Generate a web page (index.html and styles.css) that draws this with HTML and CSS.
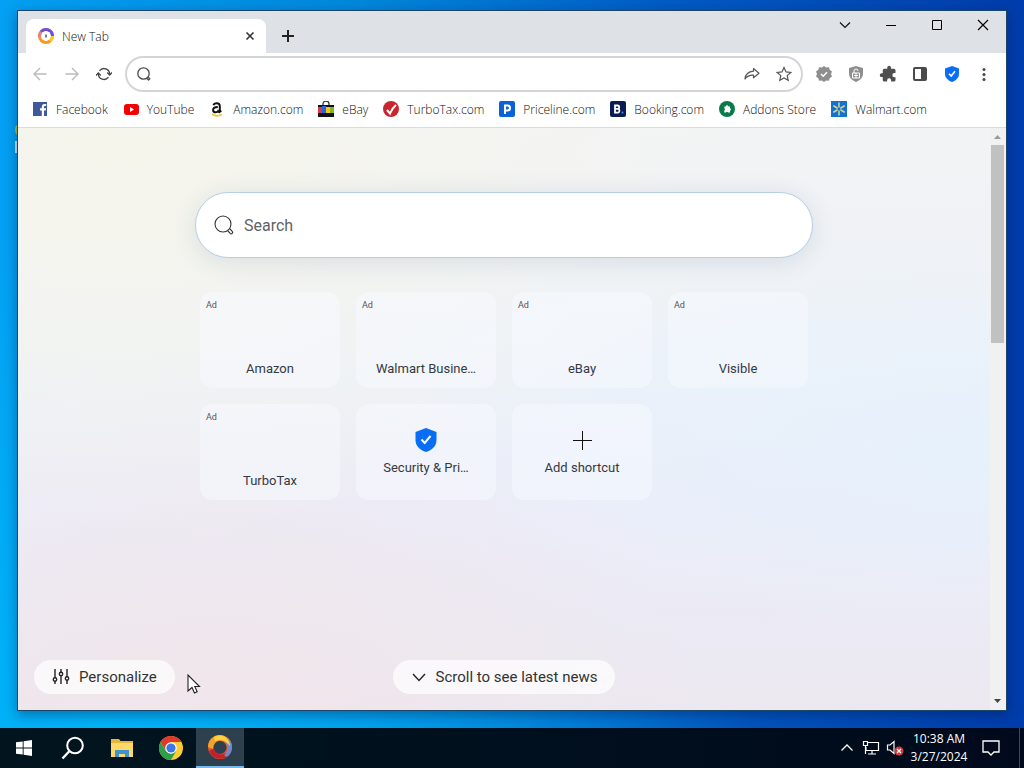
FILE: index.html
```html
<!DOCTYPE html>
<html lang="en">
<head>
    <meta charset="UTF-8">
    <meta name="viewport" content="width=device-width, initial-scale=1.0">
    <title>New Tab</title>
    <link rel="stylesheet" href="styles.css">
</head>
<body>
    <div class="desktop">
        <svg class="desktop-icon" width="20" height="36" viewBox="0 0 20 36"><circle cx="10" cy="10" r="9" fill="#a8c64a"/><path d="M1 21h3v12H1z" fill="#cfe6f5"/></svg>

        <div class="window">
            <div class="tab-strip">
                <div class="tab">
                    <svg class="tab-icon" width="16" height="16" viewBox="0 0 16 16">
                        <circle cx="8" cy="8" r="6.500" fill="#fff" stroke="#f79a1c" stroke-width="3"/>
                        <path d="M3 4A6.500 6.500 0 0 1 14.500 8" fill="none" stroke="#6a4fe0" stroke-width="3"/>
                        <path d="M1.500 9A6.500 6.500 0 0 1 3 4" fill="none" stroke="#e8808c" stroke-width="3"/>
                        <path d="M14.500 8A6.500 6.500 0 0 1 12 13" fill="none" stroke="#ffc928" stroke-width="3"/>
                        <path d="M4 4.500l4-1.500 4 1.500-1 5-3 4-3-4z" fill="#fff"/>
                        <path d="M8 6.500v3" stroke="#555" stroke-width="1.500"/>
                    </svg>
                    <span class="tab-title">New Tab</span>
                    <button class="tab-close" aria-label="Close tab">
                        <svg width="10" height="10" viewBox="0 0 10 10"><path d="M1.500 1.500l7 7M8.500 1.500l-7 7" stroke="#333" stroke-width="1.600"/></svg>
                    </button>
                </div>
                <button class="new-tab" aria-label="New tab">
                    <svg width="14" height="14" viewBox="0 0 14 14"><path d="M7 1v12M1 7h12" stroke="#222" stroke-width="2"/></svg>
                </button>
                <div class="window-controls">
                    <button aria-label="Search tabs"><svg width="12" height="12" viewBox="0 0 12 12"><path d="M1 3.500l5 5 5-5" fill="none" stroke="#111" stroke-width="1.200"/></svg></button>
                    <button aria-label="Minimize"><svg width="12" height="12" viewBox="0 0 12 12"><path d="M1 6.500h10" stroke="#000"/></svg></button>
                    <button aria-label="Maximize"><svg width="12" height="12" viewBox="0 0 12 12"><path d="M1.500 1.500h9v9h-9z" fill="none" stroke="#000"/></svg></button>
                    <button aria-label="Close"><svg width="12" height="12" viewBox="0 0 12 12"><path d="M1 1l10 10M11 1L1 11" stroke="#000" stroke-width="1.200"/></svg></button>
                </div>
            </div>

            <div class="toolbar">
                <button class="tool" aria-label="Back"><svg width="16" height="16" viewBox="0 0 16 16"><path d="M14.500 8H2M8 2L2 8l6 6" fill="none" stroke="#b9babc" stroke-width="1.400"/></svg></button>
                <button class="tool" aria-label="Forward"><svg width="16" height="16" viewBox="0 0 16 16"><path d="M1.500 8H14M8 2l6 6-6 6" fill="none" stroke="#b9babc" stroke-width="1.400"/></svg></button>
                <button class="tool" aria-label="Reload"><svg width="16" height="16" viewBox="0 0 16 16"><g fill="none" stroke="#444" stroke-width="1.300"><path d="M3.500 4.800A5.700 5.700 0 0 1 13.700 8"/><path d="M12.500 11.200A5.700 5.700 0 0 1 2.300 8"/><path d="M0 9.500l2.300-2.500L4.800 9.500M11.200 6.500l2.500 2.500L16 6.500"/></g></svg></button>
                <div class="omnibox">
                    <svg width="16" height="16" viewBox="0 0 16 16"><g fill="none" stroke="#4a4a4a" stroke-width="1.300"><circle cx="7.500" cy="7.500" r="5.700"/><path d="M11 12.500l1.500 1.500 1.300-1.300-1.500-1.500" stroke-linejoin="round"/></g></svg>
                    <input type="text" aria-label="Address bar">
                    <button class="tool" aria-label="Share"><svg width="16" height="16" viewBox="0 0 16 16"><path d="M9.500 2.500l5.500 4.700-5.500 4.600V9.200C5.500 9 3 10.200 1 13c.4-4.500 3.500-7.300 8.500-7.800z" fill="none" stroke="#555" stroke-width="1.200" stroke-linejoin="round"/></svg></button>
                    <button class="tool" aria-label="Bookmark"><svg width="16" height="16" viewBox="0 0 16 16"><path d="M8 1.500l2 4.400 4.800.5-3.600 3.200 1 4.700L8 11.900l-4.200 2.400 1-4.700L1.200 6.400 6 5.900z" fill="none" stroke="#555" stroke-width="1.200"/></svg></button>
                </div>
                <button class="tool" aria-label="Verified"><svg width="16" height="16" viewBox="0 0 16 16"><path d="M8 0l2.200 1.500 2.700-.3.800 2.600L16 5.500 15 8l1 2.500-2.300 1.700-.8 2.600-2.700-.3L8 16l-2.200-1.500-2.700.3-.8-2.600L0 10.500 1 8 0 5.500l2.300-1.700.8-2.600 2.700.3z" fill="#8e8e8e"/><path d="M5 8l2.200 2.200L11 6.200" fill="none" stroke="#fff" stroke-width="1.500"/></svg></button>
                <button class="tool" aria-label="Privacy guard"><svg width="16" height="16" viewBox="0 0 16 16"><path d="M8 0l7 2v5.500c0 4-3 7-7 8.500-4-1.500-7-4.500-7-8.500V2z" fill="#8f8f8f"/><path d="M4.500 7h7v5h-7zM6 7V5a2 2 0 0 1 4 0M6 9.500h4M8 7v5" fill="none" stroke="#fff"/></svg></button>
                <button class="tool" aria-label="Extensions"><svg width="18" height="18" viewBox="0 0 24 24"><path d="M3.500 11H5V7a2 2 0 0 1 2-2h4V3.500a2.500 2.500 0 0 1 5 0V5h4a2 2 0 0 1 2 2v3.800h-1.500a2.700 2.700 0 0 0 0 5.400H22V20a2 2 0 0 1-2 2h-3.800v-1.500a2.700 2.700 0 0 0-5.400 0V22H7a2 2 0 0 1-2-2v-4H3.500a2.500 2.500 0 0 1 0-5z" fill="#4f4f4f"/></svg></button>
                <button class="tool" aria-label="Side panel"><svg width="16" height="16" viewBox="0 0 16 16"><rect x="2" y="2" width="12" height="12" rx="1" fill="none" stroke="#4a4a4a" stroke-width="2"/><path d="M9 2h5v12H9z" fill="#4a4a4a"/></svg></button>
                <button class="tool" aria-label="Security"><svg width="16" height="16" viewBox="0 0 16 16"><path d="M8 0l7 2.500V8c0 3.800-3 6.500-7 8-4-1.500-7-4.200-7-8V2.500z" fill="#0a6ef5"/><path d="M5 7.800L7.200 10 11 5.200" fill="none" stroke="#fff" stroke-width="1.600"/></svg></button>
                <button class="tool" aria-label="Menu"><svg width="16" height="16" viewBox="0 0 16 16" fill="#444"><circle cx="8" cy="3.500" r="1.500"/><circle cx="8" cy="8.500" r="1.500"/><circle cx="8" cy="13.500" r="1.500"/></svg></button>
            </div>

            <nav class="bookmarks">
                <a href="#"><svg width="16" height="16" viewBox="0 0 16 16"><rect x="1" y="1" width="14" height="14" fill="#3f589b"/><path d="M9.800 15V9.500H8V7.300h1.800V6c0-2 1-3 2.700-3h1.700v2.100h-1.100c-.9 0-1.100.4-1.100 1.100v1.100h2.100l-.3 2.200H12V15z" fill="#fff"/></svg>Facebook</a>
                <a href="#"><svg width="16" height="16" viewBox="0 0 16 16"><rect x="1" y="3" width="15" height="11" rx="3" fill="#f40000"/><path d="M7 6l4 2.500L7 11z" fill="#fff"/></svg>YouTube</a>
                <a href="#"><svg width="16" height="16" viewBox="0 0 16 16"><path d="M4.500 4.300C4.800 2.700 6.200 2.200 7.800 2.200c2.200 0 3 1 3 2.900v3.700c0 .6.300 1 .7 1.400l-1.200 1-1.200-1.200c-1.500 2-5 1.700-5-1 0-2.300 2.300-2.900 4.700-2.900" fill="none" stroke="#111" stroke-width="2"/><path d="M3 13c3 2.300 7 2.300 10 .3" fill="none" stroke="#e9c92d" stroke-width="1.600"/></svg>Amazon.com</a>
                <a href="#"><svg width="16" height="16" viewBox="0 0 16 16"><path d="M5 4V3a3 3 0 0 1 6 0v1" fill="none" stroke="#333" stroke-width="1.300"/><path d="M0 4h16v12H0z" fill="#111"/><path d="M0 6h4v6H0z" fill="#e03645"/><path d="M4 5h4v7H4z" fill="#1c6be0"/><path d="M8 6h4v6H8z" fill="#f5c518"/><path d="M12 6h4v6h-4z" fill="#83b529"/></svg>eBay</a>
                <a href="#"><svg width="16" height="16" viewBox="0 0 16 16"><circle cx="8" cy="8" r="8" fill="#c9252d"/><path d="M4 9l3 3.500c1.300-3.500 3-6 6-8.500" fill="none" stroke="#fff" stroke-width="2"/></svg>TurboTax.com</a>
                <a href="#"><svg width="16" height="16" viewBox="0 0 16 16"><rect width="16" height="16" rx="2" fill="#0b62d6"/><path d="M6 13V5M5 4.500h3.500a2.500 2.500 0 0 1 0 5H6" fill="none" stroke="#fff" stroke-width="2"/></svg>Priceline.com</a>
                <a href="#"><svg width="16" height="16" viewBox="0 0 16 16"><rect width="16" height="16" rx="2" fill="#0b1b55"/><path d="M5 4.500h2.500a1.700 1.700 0 0 1 0 3.400H5h3a1.900 1.900 0 0 1 0 3.700H5z" fill="none" stroke="#fff" stroke-width="1.800"/><circle cx="12.500" cy="11.500" r="1" fill="#2f9be8"/></svg>Booking.com</a>
                <a href="#"><svg width="16" height="16" viewBox="0 0 16 16"><circle cx="8" cy="8" r="8" fill="#0b7a4b"/><path d="M5.500 5.500h1.200a1.300 1.300 0 0 1 2.600 0H11v1.800a1.300 1.300 0 0 1 0 2.500v1.700H9.200a1.200 1.200 0 0 0-2.200 0H5.300V9.400a1.200 1.200 0 0 0 0-2.200z" fill="#fff"/></svg>Addons Store</a>
                <a href="#"><svg width="16" height="16" viewBox="0 0 16 16"><rect width="16" height="16" fill="#1271d1"/><path d="M8 2v4M8 10v4M2.800 5l3.400 2M9.800 9l3.400 2M13.200 5L9.800 7M6.200 9l-3.400 2" stroke="#d9d68c" stroke-width="1.500" stroke-linecap="round"/></svg>Walmart.com</a>
            </nav>

            <div class="viewport">
                <main class="page">
                    <form class="search">
                        <label for="search" class="search-label">
                            <svg width="20" height="20" viewBox="0 0 20 20"><g fill="none" stroke="#333" stroke-width="1.100"><circle cx="9" cy="9" r="8"/><path d="M14 16l2.200 2.300a1.400 1.400 0 0 0 2-2L16 14" stroke-linecap="round"/></g></svg>
                        </label>
                        <input type="text" id="search" placeholder="Search">
                    </form>

                    <div class="tiles">
                        <a href="#" class="tile"><span class="ad">Ad</span><span class="name">Amazon</span></a>
                        <a href="#" class="tile"><span class="ad">Ad</span><span class="name">Walmart Busine…</span></a>
                        <a href="#" class="tile"><span class="ad">Ad</span><span class="name">eBay</span></a>
                        <a href="#" class="tile"><span class="ad">Ad</span><span class="name">Visible</span></a>
                        <a href="#" class="tile"><span class="ad">Ad</span><span class="name">TurboTax</span></a>
                        <a href="#" class="tile tile-icon">
                            <svg width="24" height="24" viewBox="0 0 24 24"><path d="M12 0l10.500 4v8c0 6-4.500 10-10.500 12C6 22 1.500 18 1.500 12V4z" fill="#0a6ef5"/><path d="M7.500 11.500l3.200 3.500 5.800-7" fill="none" stroke="#fff" stroke-width="2"/></svg>
                            <span class="name">Security &amp; Pri…</span>
                        </a>
                        <button class="tile tile-icon">
                            <svg width="24" height="24" viewBox="0 0 24 24"><path d="M12.500 3v19M3 12.500h19" stroke="#111" stroke-width="1"/></svg>
                            <span class="name">Add shortcut</span>
                        </button>
                    </div>

                    <div class="page-actions">
                        <button class="pill">
                            <svg width="18" height="18" viewBox="0 0 18 18"><g fill="#fff" stroke="#222" stroke-width="1.400"><path d="M3 1v15M9 1v15M15 1v15"/><circle cx="3" cy="11.500" r="1.700"/><circle cx="9" cy="6" r="1.700"/><circle cx="15" cy="10.500" r="1.700"/></g></svg>
                            Personalize
                        </button>
                        <button class="pill scroll-news">
                            <svg width="16" height="16" viewBox="0 0 16 16"><path d="M2 5l6 6.500L14 5" fill="none" stroke="#222" stroke-width="1.400"/></svg>
                            Scroll to see latest news
                        </button>
                    </div>
                </main>
                <div class="scrollbar">
                    <svg width="13" height="17" viewBox="0 0 13 17"><path d="M3 11l3.500-4 3.500 4z" fill="#999"/></svg>
                    <div class="thumb"></div>
                    <svg width="13" height="17" viewBox="0 0 13 17"><path d="M3 6l3.500 4L10 6z" fill="#444"/></svg>
                </div>
            </div>
        </div>

        <svg class="cursor" width="14" height="20" viewBox="0 0 14 20"><path d="M1 1v16l4-3.500L7.500 19l2.700-1.200L7.800 12.500H12.500z" fill="#fff" stroke="#222" stroke-width="1.100"/></svg>
    </div>

    <footer class="taskbar">
        <button class="task" aria-label="Start"><svg width="16" height="16" viewBox="0 0 16 16"><path d="M0 2.300L6.700 1.400v6.200H0zM7.600 1.200L16 0v7.600H7.600zM0 8.400h6.700v6.200L0 13.700zM7.600 8.400H16V16l-8.400-1.200z" fill="#fff"/></svg></button>
        <button class="task" aria-label="Search"><svg width="24" height="24" viewBox="0 0 24 24"><circle cx="14" cy="9.500" r="7.800" fill="none" stroke="#fff" stroke-width="2"/><path d="M8.500 15L1.500 22.500" stroke="#fff" stroke-width="2.400"/></svg></button>
        <button class="task" aria-label="File Explorer"><svg width="22" height="18" viewBox="0 0 22 18"><path d="M0 0h8l1.500 2H22v16H0z" fill="#e8b43a"/><path d="M0 4h22v14H0z" fill="#ffd86b"/><path d="M4 18v-7h14v7h-4v-3H8v3z" fill="#3e93cf"/></svg></button>
        <button class="task" aria-label="Chrome"><svg width="24" height="24" viewBox="0 0 24 24"><circle cx="12" cy="12" r="12" fill="#fc3"/><path d="M1.600 6A12 12 0 0 1 22.400 6H12L7 15z" fill="#dc3b2e"/><path d="M1.600 6A12 12 0 0 0 12 24l5.200-9L12 17.500 6.800 15z" fill="#2f9e4b"/><circle cx="12" cy="12" r="5.800" fill="#fff"/><circle cx="12" cy="12" r="4.600" fill="#3b78e7"/></svg></button>
        <button class="task active" aria-label="Browser"><svg width="24" height="24" viewBox="0 0 24 24"><path d="M12 0a12 12 0 1 0 0 24 12 12 0 0 0 0-24zm0 6a6.500 6.500 0 1 1 0 13 6.500 6.500 0 0 1 0-13z" fill="#e9532d" fill-rule="evenodd"/><path d="M1 16C4 24 14 26 20 21c-1 0-1-1-1.500-3.500C14 21 8 20 5.500 13.500z" fill="#c3202b"/><path d="M19 2.300A12 12 0 0 1 19.500 21.500c-3 .5-4-1-2-3 3-4 2-9-1.500-12z" fill="#7189c9"/><path d="M0 12C0 4 7-1 14 .2c5 1 8 5 8 11-3-6-8-8-13-5.200C6 8 5 11 5 14z" fill="#f0a32a"/><path d="M6 2c7-4 15 0 16 9-4-5-8-7-15-5z" fill="#ffd23e"/></svg></button>

        <div class="tray">
            <button aria-label="Show hidden icons"><svg width="14" height="14" viewBox="0 0 14 14"><path d="M1.500 9.500L7 4l5.500 5.500" fill="none" stroke="#fff" stroke-width="1.300"/></svg></button>
            <button aria-label="Network"><svg width="18" height="16" viewBox="0 0 18 16"><path d="M5 2.500h11.500v8H4V7M10 10.500v3M6 14h8M1.500 1.500h4v4h-4zM3.500 5.500V14" fill="none" stroke="#fff" stroke-width="1.200"/></svg></button>
            <button aria-label="Volume"><svg width="18" height="16" viewBox="0 0 18 16"><path d="M1.500 5H4l4-3.500v12L4 10H1.500z" fill="none" stroke="#fff" stroke-width="1.200"/><circle cx="13" cy="11" r="4.500" fill="#d13b3b"/><path d="M11 9l4 4M15 9l-4 4" stroke="#fff" stroke-width="1.200"/></svg></button>
            <div class="clock">10:38 AM<br>3/27/2024</div>
            <button class="notifications" aria-label="Notifications"><svg width="18" height="18" viewBox="0 0 18 18"><path d="M1 2h16v11h-5l-3 3-3-3H1z" fill="none" stroke="#fff" stroke-width="1.300"/></svg></button>
        </div>
    </footer>
</body>
</html>
```
FILE: styles.css
```css
* {
    box-sizing: border-box;
}

body {
    margin: 0;
    height: 100vh;
    display: flex;
    flex-direction: column;
    overflow: hidden;
    font-family: "Open Sans", "Noto Sans", sans-serif;
    font-size: 12px;
    color: #333;
}

button {
    display: flex;
    align-items: center;
    justify-content: center;
    padding: 0;
    border: none;
    background: none;
    font: inherit;
    color: inherit;
    cursor: pointer;
}

a {
    color: inherit;
    text-decoration: none;
}

input {
    flex: 1;
    min-width: 0;
    border: none;
    outline: none;
    background: none;
    font: inherit;
}

svg {
    display: block;
    flex-shrink: 0;
}

.desktop {
    position: relative;
    flex: 1;
    min-height: 0;
    display: flex;
    padding: 10px 17px 17px;
    background:
        radial-gradient(at 10% 100%, #00b4f8, rgba(0, 180, 248, 0) 50%),
        linear-gradient(to right, #04a0f3, #0088dc 35%, #005cc4 65%, #003cab);
}

.desktop-icon {
    position: absolute;
    left: 14px;
    top: 120px;
}

/* Browser window */
.window {
    position: relative;
    flex: 1;
    display: flex;
    flex-direction: column;
    background: white;
    border: 1px solid #1c4569;
    box-shadow: 0 4px 12px rgba(0, 20, 70, 0.4);
}

.tab-strip {
    display: flex;
    height: 42px;
    background: #dee1e6;
}

.tab {
    display: flex;
    align-items: center;
    width: 240px;
    margin: 8px 0 0 8px;
    padding: 0 8px 0 12px;
    background: white;
    border-radius: 8px 8px 0 0;
}

.tab-title {
    flex: 1;
    margin-left: 8px;
}

.tab-title,
.bookmarks {
    font-weight: 300;
    color: #111;
}

.tab-close {
    width: 16px;
    height: 16px;
}

.new-tab {
    width: 28px;
    height: 28px;
    margin: 11px 0 0 8px;
}

.window-controls {
    display: flex;
    margin-left: auto;
}

.window-controls button {
    width: 46px;
    height: 28px;
}

.toolbar {
    display: flex;
    align-items: center;
    gap: 4px;
    padding: 3px 8px;
}

.tool {
    width: 28px;
    height: 28px;
}

.omnibox {
    flex: 1;
    display: flex;
    align-items: center;
    gap: 4px;
    height: 36px;
    margin: 0 3px;
    padding: 0 3px 0 9px;
    border: 2px solid #d3d6d9;
    border-radius: 18px;
}

.bookmarks {
    display: flex;
    align-items: center;
    gap: 15px;
    height: 33px;
    padding: 0 14px 4px;
    border-bottom: 1px solid #d9dcdf;
    white-space: nowrap;
}

.bookmarks a {
    display: flex;
    align-items: center;
    gap: 8px;
}

/* New tab page */
.viewport {
    flex: 1;
    min-height: 0;
    display: flex;
}

.page {
    flex: 1;
    display: flex;
    flex-direction: column;
    align-items: center;
    padding: 64px 16px 16px;
    font-family: Roboto, sans-serif;
    background:
        radial-gradient(ellipse at 10% 0, #f6f5eb, rgba(246, 245, 235, 0) 50%),
        radial-gradient(ellipse at 100% 55%, #e6f1fc, rgba(230, 241, 252, 0) 40%),
        radial-gradient(ellipse at 20% 110%, #f1e5ea, rgba(241, 229, 234, 0) 45%),
        linear-gradient(#f2f3f4, #edf2f8 40%, #ebedf9 65%, #ece8f0);
}

.search {
    display: flex;
    align-items: center;
    gap: 8px;
    width: 100%;
    max-width: 618px;
    height: 66px;
    padding: 0 18px;
    background: white;
    border: 1px solid #b5cfe6;
    border-radius: 33px;
    box-shadow: 0 4px 24px rgba(60, 90, 120, 0.14);
}

.search input {
    font-size: 16px;
}

.search input::placeholder {
    color: #5f6368;
}

.tiles {
    display: grid;
    grid-template-columns: repeat(4, 140px);
    gap: 16px;
    margin-top: 34px;
}

.tile {
    display: flex;
    flex-direction: column;
    justify-content: space-between;
    height: 96px;
    padding: 8px 6px 11px;
    background: rgba(248, 250, 255, 0.5);
    border-radius: 12px;
}

.ad {
    font-size: 9px;
    line-height: 11px;
    color: #555;
}

.name {
    font-size: 13px;
    line-height: 16px;
    text-align: center;
    color: #333a44;
}

.tile-icon {
    align-items: center;
    justify-content: center;
    gap: 8px;
    padding: 8px 6px;
}

.page-actions {
    display: grid;
    grid-template-columns: 1fr auto 1fr;
    width: 100%;
    margin-top: auto;
}

.pill {
    justify-self: start;
    gap: 9px;
    height: 34px;
    padding: 0 18px;
    background: rgba(255, 255, 255, 0.7);
    border-radius: 17px;
    font-size: 15px;
}

.scrollbar {
    display: flex;
    flex-direction: column;
    justify-content: space-between;
    width: 16px;
    padding: 0 2px 0 1px;
    background: #f1f1f1;
}

.thumb {
    height: 34%;
    margin-bottom: auto;
    background: #c1c1c1;
}

.cursor {
    position: absolute;
    left: 187px;
    top: 674px;
}

/* Taskbar */
.taskbar {
    display: flex;
    gap: 1px;
    height: 40px;
    background: linear-gradient(to right, #01151f, #000a1c);
    color: white;
}

.task {
    width: 48px;
}

.active {
    background: #2c414d;
    border-bottom: 2px solid #76b9ed;
}

.tray {
    display: flex;
    align-items: center;
    margin: 0 4px 0 auto;
    padding-right: 8px;
    border-right: 1px solid #3c4654;
}

.tray button {
    width: 24px;
    height: 40px;
}

.clock {
    width: 64px;
    text-align: center;
    line-height: 18px;
}

.tray .notifications {
    width: 40px;
}
```
